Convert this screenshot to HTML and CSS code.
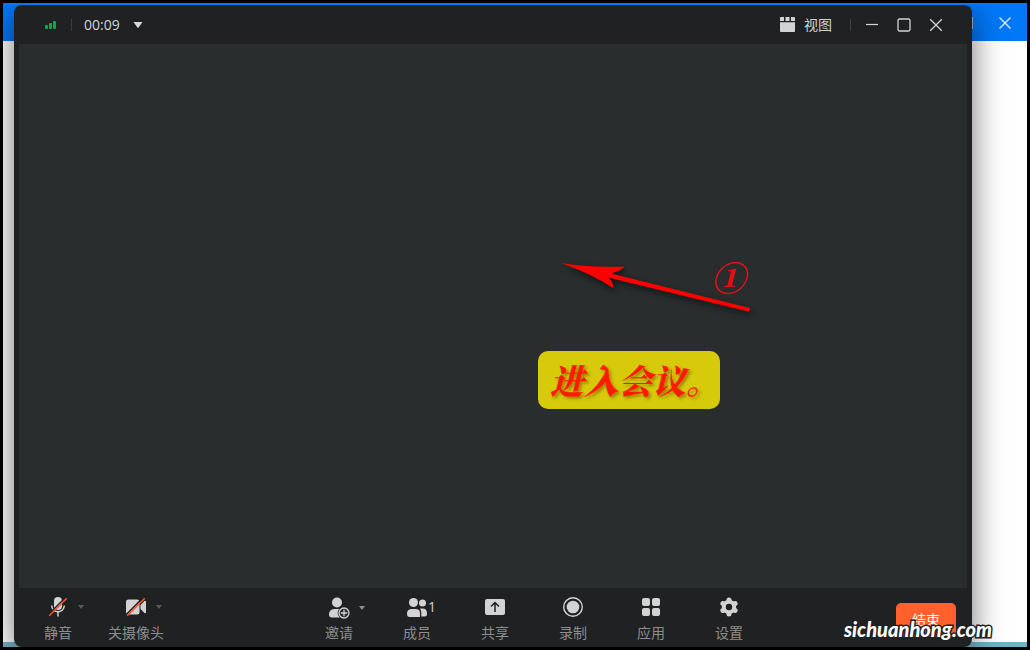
FILE: index.html
```html
<!DOCTYPE html>
<html lang="zh-CN">
<head>
    <meta charset="UTF-8">
    <meta name="viewport" content="width=device-width, initial-scale=1.0">
    <title>会议</title>
    <link rel="stylesheet" href="styles.css">
</head>
<body>
    <div class="desktop">
        <div class="back-window">
            <header class="back-header">
                <span class="back-divider"></span>
                <button type="button" class="window-btn" aria-label="关闭">
                    <svg width="14" height="14" viewBox="0 0 14 14"><path d="M1.5 1.5l11 11M12.5 1.5l-11 11" stroke="#e4eeff" stroke-width="1.3"/></svg>
                </button>
            </header>
            <div class="back-body"></div>
        </div>

        <main class="meeting">
            <header class="titlebar">
                <svg class="signal" width="12" height="10" viewBox="0 0 12 10" fill="#0da84e">
                    <rect x="0" y="5" width="3" height="4" rx="1"/>
                    <rect x="4" y="3" width="3" height="6" rx="1"/>
                    <rect x="8" y="1" width="3" height="8" rx="1"/>
                </svg>
                <span class="divider"></span>
                <button type="button" class="timer">
                    <span>00:09</span>
                    <svg width="10" height="6" viewBox="0 0 10 6"><path d="M.5 0h9L5.6 5.4q-.6.6-1.2 0z" fill="#d8d8d8"/></svg>
                </button>
                <button type="button" class="view-btn">
                    <svg width="15" height="15" viewBox="0 0 15 15" fill="#d3d3d3">
                        <path d="M0 1q0-1 1-1h3v4H0zM5.5 0h4v4h-4zM11 0h3q1 0 1 1v3h-4zM0 5.300h15V14q0 1-1 1H1q-1 0-1-1z"/>
                    </svg>
                    <span>视图</span>
                </button>
                <span class="divider"></span>
                <div class="window-controls">
                    <button type="button" class="window-btn" aria-label="最小化">
                        <svg width="14" height="14" viewBox="0 0 14 14"><path d="M1 6.500h12" stroke="#d3d3d3" stroke-width="1.2"/></svg>
                    </button>
                    <button type="button" class="window-btn" aria-label="最大化">
                        <svg width="14" height="14" viewBox="0 0 14 14"><rect x="1" y="1" width="12" height="12" rx="1.500" fill="none" stroke="#d3d3d3" stroke-width="1.3"/></svg>
                    </button>
                    <button type="button" class="window-btn" aria-label="关闭">
                        <svg width="14" height="14" viewBox="0 0 14 14"><path d="M1.200 1.200l11.600 11.600M12.800 1.200l-11.600 11.600" stroke="#d3d3d3" stroke-width="1.3"/></svg>
                    </button>
                </div>
            </header>

            <section class="stage">
                <svg class="arrow" width="200" height="64" viewBox="0 0 200 64" fill="#fe0000">
                    <path d="M1 5Q34 10 64 8.500Q63 12 51 15.500L190 50Q190.500 52 188.500 53.500L48 19.500Q54 24 53 30Q32 16 1 5z"/>
                </svg>
                <span class="step">①</span>
                <p class="callout">进入会议。</p>
            </section>

            <footer class="toolbar">
                <div class="tools">
                    <button type="button" class="tool">
                        <span class="tool-icon">
                            <svg width="20" height="20" viewBox="0 0 20 20">
                                <rect x="6" y="0" width="8" height="13" rx="4" fill="#d3d3d3"/>
                                <path d="M3.700 8.500a6.300 6.300 0 0 0 12.600 0M10 15v4.500" fill="none" stroke="#d3d3d3" stroke-width="1.500"/>
                                <path d="M0.500 17.500L17.500 0.500" stroke="#1f2122" stroke-width="1.500"/>
                                <path d="M1.200 18.800L18.800 1.200" stroke="#ff4f24" stroke-width="1.600"/>
                            </svg>
                            <svg class="caret" width="6" height="4" viewBox="0 0 6 4"><path d="M0 0h6L3 4z"/></svg>
                        </span>
                        <span>静音</span>
                    </button>
                    <button type="button" class="tool">
                        <span class="tool-icon">
                            <svg width="20" height="20" viewBox="0 0 20 20">
                                <rect x="0" y="2.500" width="13.500" height="15" rx="2.500" fill="#d3d3d3"/>
                                <path d="M14.500 8L18.500 4q1.500-.8 1.500 1v10q0 1.800-1.500 1L14.500 12z" fill="#d3d3d3"/>
                                <path d="M0.500 17.300L17 0.800" stroke="#1f2122" stroke-width="1.600"/>
                                <path d="M1.200 18.800L18.800 1.200" stroke="#ff4f24" stroke-width="1.600"/>
                            </svg>
                            <svg class="caret" width="6" height="4" viewBox="0 0 6 4"><path d="M0 0h6L3 4z"/></svg>
                        </span>
                        <span>关摄像头</span>
                    </button>
                </div>

                <div class="tools">
                    <button type="button" class="tool">
                        <span class="tool-icon">
                            <svg width="22" height="22" viewBox="0 0 22 22">
                                <circle cx="9" cy="5.500" r="5" fill="#d3d3d3"/>
                                <path d="M1 17.500Q1 12 7 12h6q4 0 4 4v4.500H4q-3 0-3-3z" fill="#d3d3d3"/>
                                <circle cx="16" cy="16" r="6.300" fill="#1f2122"/>
                                <circle cx="16" cy="16" r="5" fill="#2b2d2e" stroke="#d3d3d3" stroke-width="1.300"/>
                                <path d="M16 12.800v6.400M12.800 16h6.400" stroke="#d3d3d3" stroke-width="1.300"/>
                            </svg>
                            <svg class="caret caret-light" width="6" height="4" viewBox="0 0 6 4"><path d="M0 0h6L3 4z"/></svg>
                        </span>
                        <span>邀请</span>
                    </button>
                    <button type="button" class="tool">
                        <span class="tool-icon">
                            <svg width="22" height="20" viewBox="0 0 22 20" fill="#d3d3d3">
                                <circle cx="7.500" cy="5.500" r="4.500"/>
                                <path d="M1 16.500Q1 12 6 12h3.500q4.500 0 4.500 4v4H3.500Q1 20 1 16.500z"/>
                                <circle cx="16.500" cy="6" r="3.500"/>
                                <path d="M15.300 19.500v-3.500q0-3-1.300-4.500h2.500q4.500 0 4.500 5v.5q0 2.500-2.500 2.500z"/>
                            </svg>
                            <span class="count">1</span>
                        </span>
                        <span>成员</span>
                    </button>
                    <button type="button" class="tool">
                        <span class="tool-icon">
                            <svg width="20" height="20" viewBox="0 0 20 20">
                                <rect x="0" y="2" width="20" height="16" rx="2" fill="#d3d3d3"/>
                                <path d="M10 15V6M6 9.500L10 5.500L14 9.500" fill="none" stroke="#1f2122" stroke-width="1.500"/>
                            </svg>
                        </span>
                        <span>共享</span>
                    </button>
                    <button type="button" class="tool">
                        <span class="tool-icon">
                            <svg width="20" height="20" viewBox="0 0 20 20">
                                <circle cx="10" cy="10" r="9.300" fill="none" stroke="#d3d3d3" stroke-width="1.400"/>
                                <circle cx="10" cy="10" r="6.300" fill="#d3d3d3"/>
                            </svg>
                        </span>
                        <span>录制</span>
                    </button>
                    <button type="button" class="tool">
                        <span class="tool-icon">
                            <svg width="20" height="20" viewBox="0 0 20 20" fill="#d3d3d3">
                                <rect x="1" y="1" width="8" height="8" rx="2"/>
                                <rect x="11" y="1" width="8" height="8" rx="2"/>
                                <rect x="1" y="11" width="8" height="8" rx="2"/>
                                <rect x="11" y="11" width="8" height="8" rx="2"/>
                            </svg>
                        </span>
                        <span>应用</span>
                    </button>
                    <button type="button" class="tool">
                        <span class="tool-icon">
                            <svg width="20" height="20" viewBox="0 0 20 20" fill="#d3d3d3">
                                <g stroke="#d3d3d3" stroke-width="5" stroke-linecap="round">
                                    <path d="M10 3V5M10 17V15M3.900 6.500L5.700 7.500M16.100 13.500L14.300 12.500M3.900 13.500L5.700 12.500M16.100 6.500L14.300 7.500"/>
                                </g>
                                <circle cx="10" cy="10" r="5.200" fill="none" stroke="#d3d3d3" stroke-width="4"/>
                                <circle cx="10" cy="10" r="3.200" fill="#1f2122"/>
                            </svg>
                        </span>
                        <span>设置</span>
                    </button>
                </div>

                <button type="button" class="end-btn">结束</button>
            </footer>
        </main>

        <span class="watermark">sichuanhong.com</span>
    </div>
</body>
</html>
```
FILE: styles.css
```css
:root {
    --bar-color: #1f2122;
    --stage-color: #292d2e;
    --icon-color: #d3d3d3;
    --label-color: #8d8e8f;
    --blue: #0078f8;
    --orange: #ff602c;
}
* {
    box-sizing: border-box;
}
body {
    margin: 0;
    background-color: #000;
    font-family: "Open Sans", "Noto Sans CJK SC", sans-serif;
    font-size: 14px;
    line-height: 20px;
}
button {
    border: none;
    padding: 0;
    background: none;
    font: inherit;
    color: inherit;
    cursor: pointer;
}
svg {
    display: block;
}
.desktop {
    position: relative;
    height: 100vh;
    padding: 3px;
    overflow: hidden;
}
.back-window {
    display: flex;
    flex-direction: column;
    height: 100%;
    border-bottom: 5px solid #70b3c9;
}
.back-header {
    display: flex;
    align-items: center;
    justify-content: flex-end;
    gap: 25px;
    height: 38px;
    padding-top: 2px;
    padding-right: 15px;
    background-color: var(--blue);
}
.back-divider {
    width: 1px;
    height: 12px;
    background-color: #a9b4d8;
}
.back-body {
    flex: 1;
    background-color: #fff;
}

/* meeting window */
.meeting {
    position: absolute;
    top: 5px;
    right: 58px;
    bottom: 3px;
    left: 14px;
    display: flex;
    flex-direction: column;
    border-radius: 8px;
    background-color: var(--bar-color);
    box-shadow: 0 8px 32px rgba(0, 0, 0, 0.55);
    clip-path: inset(0 -55px 0 -11px);
}
.titlebar {
    display: flex;
    align-items: center;
    height: 39px;
    padding: 0 29px;
    color: var(--icon-color);
}
.signal {
    margin-left: 2px;
}
.divider {
    width: 1px;
    height: 12px;
    margin: 0 12px 0 14px;
    background-color: #3d3f40;
}
.timer {
    display: flex;
    align-items: center;
    gap: 13px;
}
.view-btn {
    display: flex;
    align-items: center;
    gap: 9px;
    margin-left: auto;
    margin-right: 4px;
}
.window-controls {
    display: flex;
    gap: 18px;
    margin-left: 2px;
}
.stage {
    position: relative;
    flex: 1;
    margin: 0 5px;
    background-color: var(--stage-color);
}

/* annotations drawn over the stage */
.arrow,
.step,
.callout {
    position: absolute;
}
.arrow {
    top: 214px;
    left: 541px;
    filter: drop-shadow(2px 3px 3px rgba(0, 0, 0, 0.6));
}
.step {
    top: 213px;
    left: 692px;
    color: #e80d12;
    font-family: "Noto Serif CJK SC", "Noto Sans CJK SC", serif;
    font-size: 34px;
    font-style: italic;
    font-weight: 900;
    line-height: 40px;
}
.callout {
    top: 307px;
    left: 519px;
    margin: 0;
    padding: 9px 0 9px 12px;
    width: 182px;
    border-radius: 10px;
    background-color: #d6ca0b;
    color: #ff1a00;
    font-family: "Noto Serif CJK SC", "Noto Sans CJK SC", serif;
    font-size: 34px;
    font-style: italic;
    font-weight: 900;
    line-height: 40px;
    white-space: nowrap;
    text-shadow: 2px 2px 3px rgba(90, 60, 0, 0.5);
}

/* bottom toolbar */
.toolbar {
    display: flex;
    justify-content: space-between;
    height: 59px;
    padding: 9px 16px 0 5px;
}
.tools {
    display: flex;
}
.tool {
    display: flex;
    flex-direction: column;
    gap: 6px;
    width: 78px;
    color: var(--label-color);
}
.tool-icon {
    display: grid;
    grid-template-columns: 1fr auto 1fr;
    align-items: center;
    width: 100%;
    height: 20px;
}
.tool-icon > :first-child {
    grid-column: 2;
}
.caret {
    margin-left: 10px;
    fill: #57595a;
}
.caret-light {
    margin-left: 9px;
    fill: #8d8e8f;
}
.count {
    justify-self: start;
    color: var(--icon-color);
}
.end-btn {
    align-self: flex-start;
    width: 60px;
    height: 34px;
    margin: 6px 0 0 3px;
    border-radius: 5px;
    background-color: var(--orange);
    color: #fff;
}
.watermark {
    position: absolute;
    right: 38px;
    bottom: 9px;
    color: #fff;
    font-family: Lato, sans-serif;
    font-size: 20px;
    font-style: italic;
    font-weight: 900;
    line-height: 24px;
    -webkit-text-stroke: 3px #222;
    paint-order: stroke fill;
}
```
